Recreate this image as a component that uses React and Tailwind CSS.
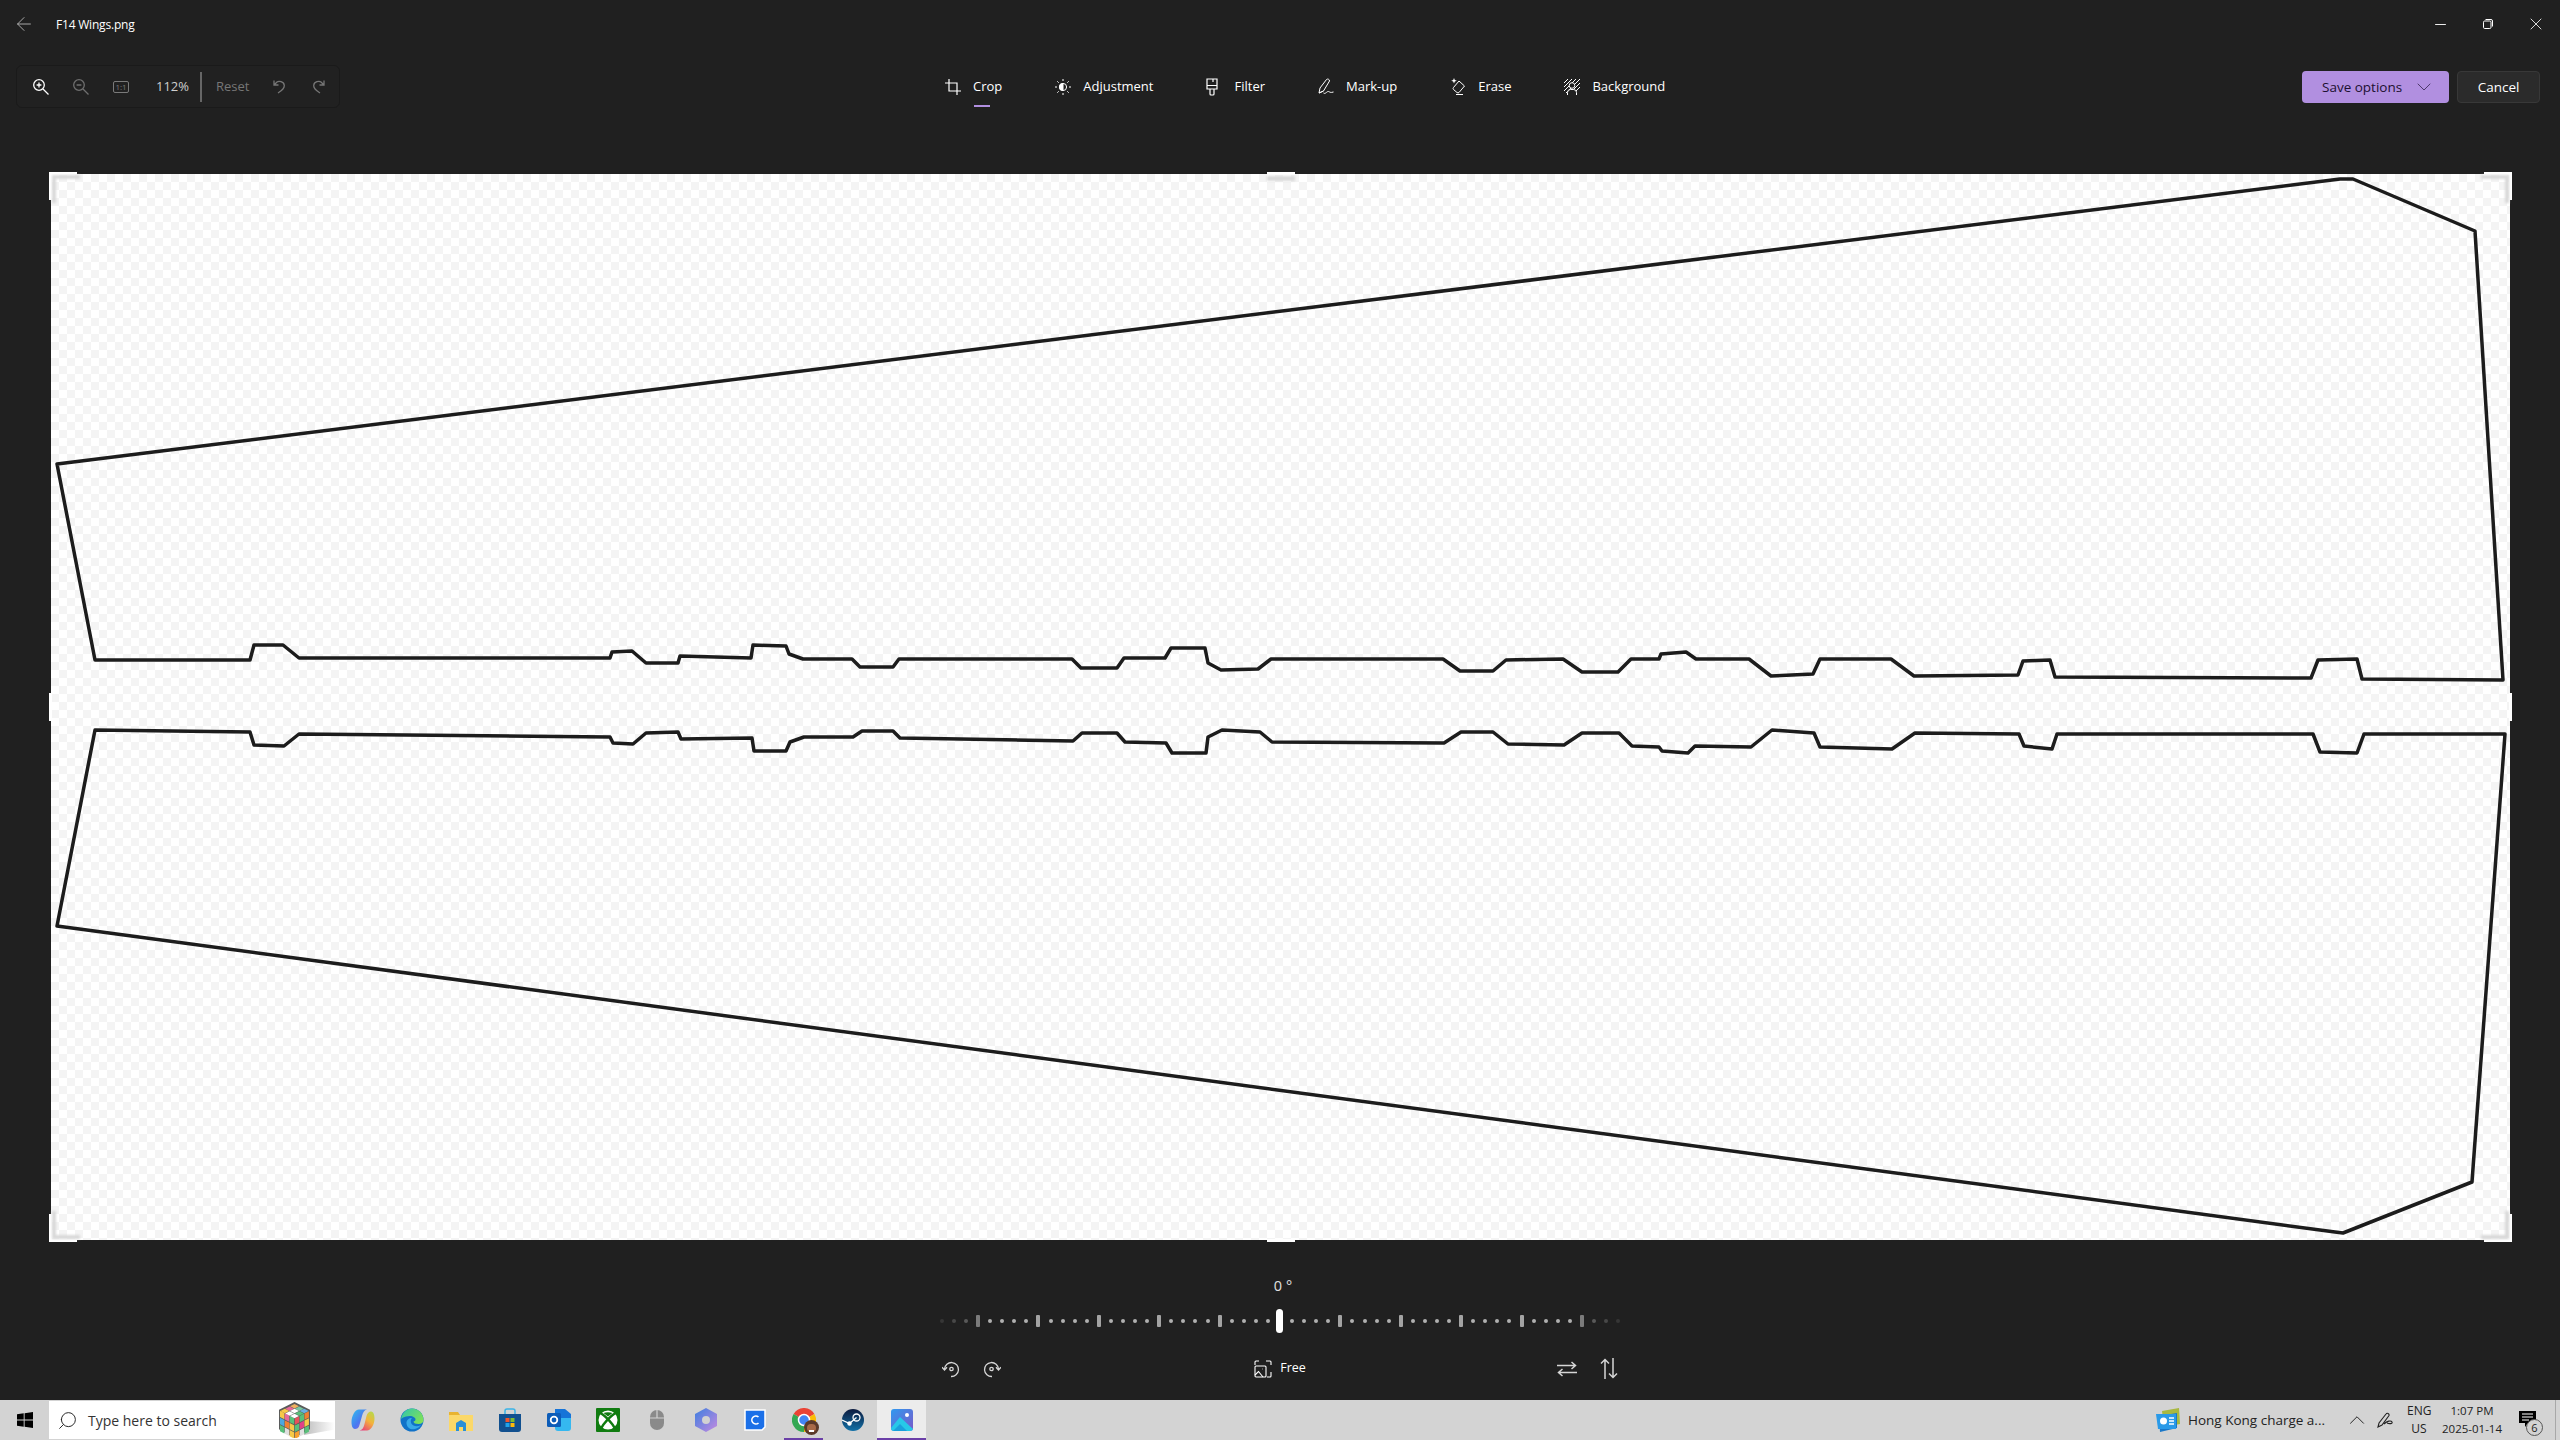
import React from "react";
import { ArrowLeft, ChevronDown, ChevronUp, Minus, X, Search } from "lucide-react";

// wing outlines, in page pixels (the svg viewBox starts at the image corner)
const upperWing = "57,464 2340,179 2353,179 2475,231 2503,680 2362,679 2357,659 2318,660 2311,678 2055,677 2050,660 2023,661 2018,675 1914,676 1891,659 1820,659 1813,674 1771,676 1749,659 1696,659 1686,652 1661,654 1659,659 1631,659 1618,672 1582,672 1563,659 1506,660 1493,671 1460,671 1443,659 1271,659 1258,669 1221,670 1208,663 1205,648 1171,648 1165,658 1124,658 1117,668 1081,668 1072,659 899,659 893,667 860,667 852,659 803,659 789,654 786,646 753,645 751,658 680,656 678,663 646,663 632,651 612,652 610,658 299,658 283,645 254,645 250,660 95,660";
const lowerWing = "57,926 2335,1232 2343,1233 2472,1182 2505,734 2364,734 2357,753 2320,752 2313,734 2057,734 2052,749 2024,746 2019,734 1915,733 1892,749 1820,747 1814,733 1772,730 1751,747 1695,746 1688,753 1662,751 1659,747 1632,746 1619,733 1582,733 1564,745 1508,744 1493,732 1461,732 1444,743 1272,742 1260,732 1222,730 1208,737 1206,753 1172,753 1166,743 1125,742 1117,733 1082,733 1073,741 900,738 893,731 862,731 853,737 804,737 790,742 786,751 754,751 752,738 681,739 678,732 646,733 633,744 613,743 610,737 299,734 284,746 254,745 250,732 95,730";

const tabs = [
  { label: "Crop", icon: CropIcon, active: true },
  { label: "Adjustment", icon: AdjustIcon },
  { label: "Filter", icon: BrushIcon },
  { label: "Mark-up", icon: MarkupIcon },
  { label: "Erase", icon: EraseIcon },
  { label: "Background", icon: BackgroundIcon },
];

function CropIcon() {
  return (
    <svg width="16" height="16" viewBox="0 0 16 16" fill="none" stroke="currentColor" strokeWidth="1.2">
      <path d="M4 0v12h12M0 4h12v12" />
    </svg>
  );
}

function AdjustIcon() {
  return (
    <svg width="16" height="16" viewBox="0 0 16 16" fill="none" stroke="currentColor" strokeWidth="1">
      <circle cx="8" cy="8" r="3.6" />
      <path d="M8 4.4a3.6 3.6 0 0 0 0 7.2z" fill="currentColor" />
      <path d="M8 0v2M8 14v2M0 8h2M14 8h2M2.3 2.3l1.4 1.4M12.3 12.3l1.4 1.4M2.3 13.7l1.4-1.4M12.3 3.7l1.4-1.4" />
    </svg>
  );
}

function BrushIcon() {
  return (
    <svg width="16" height="18" viewBox="0 0 16 18" fill="none" stroke="currentColor" strokeWidth="1.2">
      <path d="M1 1h10v10H1zM1 7.500h10M4 11v5a1 1 0 0 0 1 1h2a1 1 0 0 0 1-1v-5M7 1v3" />
    </svg>
  );
}

function MarkupIcon() {
  return (
    <svg width="16" height="17" viewBox="0 0 16 17" fill="none" stroke="currentColor" strokeWidth="1">
      <path d="M1 15l1-5 6.500-8.500c1-1 3.200-.2 3 1.500L5.500 13z" />
      <path d="M1 15l4.500-2M5.500 15c2 1.500 3.500-2 5-1.500s1.500 1.500 5 .5" />
    </svg>
  );
}

function EraseIcon() {
  return (
    <svg width="16" height="17" viewBox="0 0 16 17" fill="none" stroke="currentColor" strokeWidth="1">
      <path d="M9 3l5.500 5-5.500 6.500a1.500 1.500 0 0 1-2 0L3.500 11.500a1.500 1.500 0 0 1 0-2z" />
      <path d="M4 0l.8 2 2 .8-2 .8-.8 2-.8-2-2-.8 2-.8z" fill="currentColor" stroke="none" />
      <path d="M6 16.500h7" />
    </svg>
  );
}

function BackgroundIcon() {
  return (
    <svg width="16" height="16" viewBox="0 0 16 16" fill="none" stroke="currentColor" strokeWidth="1">
      <path d="M0 4l4-4M0 8l8-8M0 12L12 0M2 14L16 0M6 14l10-10M10 14l6-6" />
      <circle cx="8" cy="6.500" r="2.800" fill="#202020" />
      <path d="M3.500 16v-2.500a3 3 0 0 1 3-3h3a3 3 0 0 1 3 3V16" fill="#202020" />
    </svg>
  );
}

function ZoomIcon({ plus, className }) {
  return (
    <svg className={className} width="16" height="16" viewBox="0 0 16 16" fill="none" stroke="currentColor" strokeWidth="1.300">
      <circle cx="6" cy="6" r="5.300" />
      <path d="M10 10l5.500 5.500M3.600 6h4.800" />
      {plus && <path d="M6 3.600v4.800" />}
    </svg>
  );
}

function UndoIcon({ flip }) {
  return (
    <svg className={flip ? "-scale-x-100" : ""} width="13" height="15" viewBox="0 0 13 15" fill="none" stroke="currentColor" strokeWidth="1.300">
      <path d="M1 1.500v4.500h4.500M1 6l3-3c1.500-1.200 7-.8 7.300 3.500.2 3-2.300 5-6.300 7.500" />
    </svg>
  );
}

function RotateIcon({ flip }) {
  return (
    <svg className={flip ? "-scale-x-100" : ""} width="18" height="18" viewBox="0 0 18 18" fill="none" stroke="currentColor" strokeWidth="1.300">
      <path d="M2.500 9A7 7 0 1 1 9 16.500" />
      <path d="M0 7.200L2.500 10 5 7.200" />
      <circle cx="9.500" cy="9" r="1.700" />
    </svg>
  );
}

function FreeIcon() {
  return (
    <svg width="18" height="18" viewBox="0 0 18 18" fill="none" stroke="currentColor" strokeWidth="1.100">
      <path d="M1 5V2a1 1 0 0 1 1-1h3M12 1h4a1 1 0 0 1 1 1v3M17 12v4a1 1 0 0 1-1 1h-3" />
      <rect x="1" y="6" width="11" height="11" rx="1" />
      <path d="M1 15l3.500-3.500L9 17M8.500 9h.5" />
    </svg>
  );
}

function SwapIcon() {
  return (
    <svg width="20" height="16" viewBox="0 0 20 16" fill="none" stroke="currentColor" strokeWidth="1.500">
      <path d="M0 4.500h18M14.500 1L18.500 4.500 14.500 8M20 11.500H2M5.500 8L1.500 11.500 5.500 15" />
    </svg>
  );
}

function FlipIcon() {
  return (
    <svg width="18" height="21" viewBox="0 0 18 21" fill="none" stroke="currentColor" strokeWidth="1.500">
      <path d="M5 21V1.500M1 5.500L5 1.500 9 5.500M13 0v19.500M9 15.500l4 4 4-4" />
    </svg>
  );
}

// corner bracket of the crop box, white edge with a soft grey inner shade
function Corner({ className, shade }) {
  return (
    <div className={`absolute w-[28px] h-[28px] border-white ${className}`}>
      <div className={`absolute w-[28px] h-[28px] border-[#d9d9d9] blur-[1px] ${shade}`} />
    </div>
  );
}

function RotationScale() {
  const marks = [];
  for (let i = -28; i <= 28; i++) {
    const far = Math.abs(i);
    const fade = far > 25 ? 0.4 - (far - 26) * 0.12 : far === 25 ? 0.7 : 1;
    let mark;
    if (i === 0) mark = <div className="w-[7px] h-[24px] rounded-full bg-white" />;
    else if (i % 5 === 0) mark = <div className="w-[4px] h-[12px] rounded-[1px] bg-[#a3a3a3]" style={{ opacity: fade }} />;
    else mark = <div className="w-[4px] h-[4px] rounded-full bg-[#b0b0b0]" style={{ opacity: fade }} />;
    marks.push(
      <div key={i} className="w-[12.08px] flex justify-center items-center">
        {mark}
      </div>
    );
  }
  return <div className="flex items-center justify-center h-[24px]">{marks}</div>;
}

// taskbar logos
function Copilot() {
  return (
    <svg width="24" height="24" viewBox="0 0 24 24">
      <defs>
        <linearGradient id="cpA" x1="0" y1="0" x2="1" y2="1">
          <stop offset="0" stopColor="#2fc0ee" />
          <stop offset="0.55" stopColor="#4a78f0" />
          <stop offset="1" stopColor="#b85ad8" />
        </linearGradient>
        <linearGradient id="cpB" x1="0.800" y1="0" x2="0.200" y2="1">
          <stop offset="0" stopColor="#b8d84a" />
          <stop offset="0.45" stopColor="#f4b23c" />
          <stop offset="1" stopColor="#e8407a" />
        </linearGradient>
      </defs>
      <path d="M8 1.500h8c-3 .5-4 3-5 6.500l-2.500 9c-.8 3-2.500 4-4.500 4-2.800 0-3.500-4-3.500-7C.5 8 4 1.500 8 1.500z" fill="url(#cpA)" />
      <path d="M16 22.500H8.500c3-.5 4-3 5-6.500l2-8c.8-3 2.500-4.500 4.500-4.500 2.800 0 3.500 4 3.500 7 0 6-3.500 12-7.500 12z" fill="url(#cpB)" />
    </svg>
  );
}

function Edge() {
  return (
    <svg width="24" height="24" viewBox="0 0 24 24">
      <defs>
        <linearGradient id="edA" x1="0" y1="0" x2="1" y2="0.600">
          <stop offset="0" stopColor="#2fc5b0" />
          <stop offset="1" stopColor="#7ce05a" />
        </linearGradient>
      </defs>
      <circle cx="12" cy="12" r="11.500" fill="#1172c8" />
      <path d="M1 11C2 5 6.500.500 12 .500 18.500.500 23.500 5.500 23.500 12c0 2.500-2 4-5 4-3 0-5-.8-5-2.500 2-.5 2.500-2 1.500-3.500C13 7.500 9 7.500 6 8.500 4 9 2 10 1 11z" fill="url(#edA)" />
      <path d="M15 21c-4 1-8-1-8.500-5.500C6.200 12 9 10 12 10c-2 2-1.500 6 1.500 7.500 2 1 5 1 7.500-.5-1.200 2-3.500 3.300-6 4z" fill="#38a9e8" />
    </svg>
  );
}

function Explorer() {
  return (
    <svg width="24" height="22" viewBox="0 0 24 22">
      <path d="M0 3h9l2 3h13v16H0z" fill="#e8b330" />
      <rect x="0" y="6" width="24" height="16" fill="#fbd869" />
      <path d="M7 14l5-3 5 3v8h-3v-4h-4v4H7z" fill="#2a8fd8" />
    </svg>
  );
}

function Store() {
  return (
    <svg width="24" height="24" viewBox="0 0 24 24">
      <path d="M7 6V3a2 2 0 0 1 2-2h6a2 2 0 0 1 2 2v3" fill="none" stroke="#3ab4e8" strokeWidth="1.500" />
      <path d="M1 6h22v15a3 3 0 0 1-3 3H4a3 3 0 0 1-3-3z" fill="#11508f" />
      <rect x="7.500" y="10" width="4" height="4" fill="#f0542c" />
      <rect x="12.500" y="10" width="4" height="4" fill="#7cbb30" />
      <rect x="7.500" y="15" width="4" height="4" fill="#1fa3ea" />
      <rect x="12.500" y="15" width="4" height="4" fill="#fdb90a" />
    </svg>
  );
}

function Outlook() {
  return (
    <svg width="24" height="24" viewBox="0 0 24 24">
      <path d="M8 1h10l6 5v11a3 3 0 0 1-3 3H8z" fill="#1674d8" />
      <path d="M8 10h16v10a3 3 0 0 1-3 3H11a3 3 0 0 1-3-3z" fill="#35b8f0" />
      <rect x="0" y="5" width="14" height="14" rx="1.500" fill="#0c5cb8" />
      <circle cx="7" cy="12" r="3.300" fill="none" stroke="#ffffff" strokeWidth="1.800" />
    </svg>
  );
}

function Xbox() {
  return (
    <svg width="24" height="24" viewBox="0 0 24 24">
      <rect width="24" height="24" rx="1" fill="#107c10" />
      <circle cx="12" cy="12" r="9.500" fill="#ffffff" />
      <path d="M3 4C8 7 15 13 20 22M21 4C16 7 9 13 4 22" fill="none" stroke="#107c10" strokeWidth="2.500" />
      <path d="M7.500 5C10 4 14 4 16.500 5L12 8.500z" fill="#107c10" />
    </svg>
  );
}

function MouseApp() {
  return (
    <svg width="14" height="20" viewBox="0 0 14 20">
      <rect width="14" height="20" rx="7" fill="#8a8a8a" />
      <path d="M0 8h14M7 0v8" stroke="#d2d2d2" strokeWidth="1.200" />
    </svg>
  );
}

function M365() {
  return (
    <svg width="22" height="24" viewBox="0 0 22 24">
      <defs>
        <linearGradient id="msA" x1="0" y1="0" x2="1" y2="1">
          <stop offset="0" stopColor="#3d7ee0" />
          <stop offset="1" stopColor="#c48ae0" />
        </linearGradient>
      </defs>
      <path d="M11 0l11 6v12l-11 6-11-6V6z" fill="url(#msA)" />
      <circle cx="11" cy="12" r="4" fill="#d2d2d2" />
    </svg>
  );
}

function CApp() {
  return (
    <svg width="22" height="22" viewBox="0 0 22 22">
      <path d="M1 1h20v17l-3 3H1z" fill="#1a6fe8" stroke="#ffffff" strokeWidth="1.500" />
      <path d="M14.500 8a4 4 0 1 0 0 6" fill="none" stroke="#ffffff" strokeWidth="1.600" />
    </svg>
  );
}

function ChromeAvatar() {
  return (
    <div className="relative w-[24px] h-[24px]">
      <svg width="24" height="24" viewBox="0 0 24 24">
        <path d="M12 12L1.600 6A12 12 0 0 1 22.400 6z" fill="#ea4335" />
        <path d="M12 12l10.400-6A12 12 0 0 1 12 24z" fill="#fbbc05" />
        <path d="M12 12L12 24A12 12 0 0 1 1.600 6z" fill="#34a853" />
        <circle cx="12" cy="12" r="5.500" fill="#4285f4" stroke="#ffffff" strokeWidth="1.500" />
      </svg>
      <div className="absolute -right-[3px] -bottom-[3px] w-[15px] h-[15px] rounded-full bg-[#5a3a2a]">
        <div className="absolute left-[3px] top-[4px] w-[9px] h-[8px] rounded-full bg-[#a86a48]" />
        <div className="absolute left-[5px] top-[10px] w-[5px] h-[2px] bg-white" />
      </div>
    </div>
  );
}

function Steam() {
  return (
    <svg width="22" height="22" viewBox="0 0 22 22">
      <defs>
        <linearGradient id="stA" x1="0" y1="0" x2="0" y2="1">
          <stop offset="0" stopColor="#0c1a3e" />
          <stop offset="1" stopColor="#1372a8" />
        </linearGradient>
      </defs>
      <circle cx="11" cy="11" r="11" fill="url(#stA)" />
      <circle cx="14.500" cy="8.500" r="3.500" fill="none" stroke="#ffffff" strokeWidth="1.300" />
      <circle cx="7.500" cy="14.500" r="2.200" fill="#ffffff" />
      <path d="M0 11l7.500 3.500 7-6" stroke="#ffffff" strokeWidth="1.300" fill="none" />
    </svg>
  );
}

function Photos() {
  return (
    <svg width="22" height="22" viewBox="0 0 22 22">
      <defs>
        <linearGradient id="phA" x1="0" y1="0" x2="1" y2="1">
          <stop offset="0" stopColor="#2f9af0" />
          <stop offset="1" stopColor="#7a58c8" />
        </linearGradient>
      </defs>
      <rect width="22" height="22" rx="3" fill="url(#phA)" />
      <path d="M0 19l9-11 13 12v-1a3 3 0 0 1-3 3H3a3 3 0 0 1-3-3z" fill="#27c8e8" />
      <path d="M2 22l7-7 7 7z" fill="#1aa0dc" />
      <circle cx="16" cy="6" r="2" fill="#ffffff" />
    </svg>
  );
}

// little cube that sits in the search box
function Cube() {
  const left = ["#f7c948", "#e86a9a", "#58c07a", "#4aa8e0", "#f08030", "#f7c948", "#58c07a", "#e0e0e0", "#f7c948"];
  const right = ["#e8505a", "#58c07a", "#f08030", "#58c07a", "#e0408a", "#f7c948", "#f7a030", "#e0e0e0", "#58c07a"];
  const top = ["#f0b060", "#7ac8a0", "#6ab0e0", "#e86a9a", "#ffffff", "#58c07a", "#f7c948", "#ffffff", "#ffffff"];
  const cells = [];
  for (let r = 0; r < 3; r++) {
    for (let c = 0; c < 3; c++) {
      const k = r * 3 + c;
      const lx = 1 + c * 5;
      const ly = 9 + r * 7.300 + c * 2.600;
      cells.push(<path key={`l${k}`} d={`M${lx} ${ly}l4.600 2.300v6.500l-4.600-2.300z`} fill={left[k]} />);
      const rx = 16.300 + c * 5;
      const ry = 17 + r * 7.300 - c * 2.600;
      cells.push(<path key={`r${k}`} d={`M${rx} ${ry}l4.600-2.300v6.500l-4.600 2.300z`} fill={right[k]} />);
      const tx = 16 + (c - r) * 5;
      const ty = 2 + (c + r) * 2.500;
      cells.push(<path key={`t${k}`} d={`M${tx} ${ty}l4.600 2.300-4.600 2.300-4.600-2.300z`} fill={top[k]} />);
    }
  }
  return (
    <svg width="31" height="36" viewBox="0 0 32 37">
      <path d="M16 0l16 8v20l-16 9-16-9V8z" fill="#5a5a5a" />
      {cells}
    </svg>
  );
}

const taskbarApps = [
  { id: "copilot", el: <Copilot /> },
  { id: "edge", el: <Edge /> },
  { id: "explorer", el: <Explorer /> },
  { id: "store", el: <Store /> },
  { id: "outlook", el: <Outlook /> },
  { id: "xbox", el: <Xbox /> },
  { id: "mouse", el: <MouseApp /> },
  { id: "m365", el: <M365 /> },
  { id: "capp", el: <CApp /> },
  { id: "chrome", el: <ChromeAvatar />, running: true },
  { id: "steam", el: <Steam /> },
  { id: "photos", el: <Photos />, active: true },
];

function Taskbar() {
  return (
    <div className="h-[40px] shrink-0 bg-[#d3d3d3] flex items-center text-[#222222] font-['Open_Sans',sans-serif]">
      <div className="w-[49px] h-full flex items-center justify-center">
        <svg width="16" height="16" viewBox="0 0 16 16" fill="#000000">
          <path d="M0 2.300l6.700-1v6.300H0zM7.600 1.200L16 0v7.600H7.600zM0 8.400h6.700v6.300L0 13.700zM7.600 8.400H16V16l-8.400-1.200z" />
        </svg>
      </div>
      <div className="relative w-[286px] h-[38px] bg-white flex items-center pl-[8px] overflow-hidden">
        <Search size={21} strokeWidth={1.100} className="-scale-x-100 text-[#222222]" />
        <span className="ml-[10px] text-[14px] text-[#333333] whitespace-nowrap">Type here to search</span>
        <div className="absolute left-[255px] top-[20px] w-[31px] h-[14px] bg-gradient-to-r from-[#bdbdbd] to-white [clip-path:polygon(0_0,100%_10%,100%_60%,0_100%)]" />
        <div className="absolute left-[230px] top-[1px]">
          <Cube />
        </div>
      </div>
      <div className="flex h-full ml-[3px]">
        {taskbarApps.map((app) => (
          <div key={app.id} className={`relative w-[49px] h-full flex items-center justify-center ${app.active ? "bg-[#ececec]" : ""}`}>
            {app.el}
            {app.running && <div className="absolute bottom-0 left-[5px] right-[5px] h-[2px] bg-[#6b3fa8]" />}
            {app.active && <div className="absolute bottom-0 left-0 right-0 h-[2px] bg-[#6b3fa8]" />}
          </div>
        ))}
      </div>
      <div className="ml-auto flex items-center h-full">
        <svg width="24" height="24" viewBox="0 0 24 24">
          <path d="M6 3l17-3 1 16-16 3z" fill="#a8b840" />
          <path d="M3 8l18-3v15L4 24z" fill="#1a78c8" />
          <path d="M0 6h20v15H2z" fill="#2a9ae8" />
          <circle cx="7.500" cy="13" r="3.500" fill="#ffffff" />
          <path d="M13 10h5M13 13h5M13 16h5" stroke="#ffffff" strokeWidth="1.300" />
        </svg>
        <span className="ml-[8px] text-[13.500px] whitespace-nowrap">Hong Kong charge a...</span>
        <ChevronUp size={26} strokeWidth={0.900} className="ml-[19px]" />
        <svg className="ml-[7px]" width="16" height="16" viewBox="0 0 16 16" fill="none" stroke="#222222" strokeWidth="1.100">
          <path d="M1 15l1-4 7-9c1-1.500 3.500-.5 3 1.500L5 13zM7 12c3-3 7-4 8-2s-3 2-5 1" />
        </svg>
        <div className="ml-[14px] w-[24px] text-center text-[12px] leading-[18px]">
          ENG
          <br />
          US
        </div>
        <div className="ml-[11px] w-[60px] text-center text-[11.500px] leading-[18px] whitespace-nowrap">
          1:07 PM
          <br />
          2025-01-14
        </div>
        <div className="relative ml-[17px] w-[34px] h-full">
          <svg className="absolute left-0 top-[11px]" width="17" height="16" viewBox="0 0 17 16">
            <path d="M0 0h17v12H9l-3 4v-4H0z" fill="#000000" />
            <path d="M3 3h11M3 6h11M3 9h7" stroke="#ffffff" strokeWidth="1" />
          </svg>
          <div className="absolute left-[7px] top-[19px] w-[17px] h-[17px] rounded-full border border-[#555555] bg-[#d3d3d3] flex items-center justify-center text-[11px] leading-none">
            6
          </div>
        </div>
        <div className="ml-[2px] w-px h-full bg-[#a8a8a8] mr-[4px]" />
      </div>
    </div>
  );
}

export default function App() {
  return (
    <div className="w-screen h-screen flex flex-col overflow-hidden bg-[#202020] text-white font-['Open_Sans',sans-serif]">
      {/* title bar */}
      <div className="h-[48px] shrink-0 flex items-center pl-[13px]">
        <ArrowLeft size={22} strokeWidth={1} className="text-[#b5b5b5]" />
        <span className="ml-[21px] mt-[1px] text-[12px] tracking-[-0.2px]">F14 Wings.png</span>
        <div className="ml-auto flex items-center text-white">
          <div className="w-[48px] flex justify-center">
            <Minus size={17} strokeWidth={1.300} />
          </div>
          <div className="w-[48px] flex justify-center">
            <svg width="10" height="10" viewBox="0 0 10 10" fill="none" stroke="currentColor" strokeWidth="1">
              <rect x="0.500" y="2" width="7.500" height="7.500" rx="1.200" />
              <path d="M2.500 .5H8A1.500 1.500 0 0 1 9.500 2v5.500" />
            </svg>
          </div>
          <div className="w-[48px] flex justify-center">
            <X size={20} strokeWidth={1} />
          </div>
        </div>
      </div>

      {/* tool row */}
      <div className="h-[43px] mt-[17px] shrink-0 flex pl-[16px] pr-[20px]">
        <div className="w-[324px] h-full rounded-[6px] border border-[#1a1a1a] bg-[#212121] flex items-center relative">
          <ZoomIcon plus className="ml-[16px] text-white" />
          <ZoomIcon className="ml-[24px] text-[#6f6f6f]" />
          <div className="ml-[24px] w-[16px] h-[12px] rounded-[2px] border border-[#7a7a7a] text-[#7a7a7a] text-[8px] leading-[10px] text-center">
            1:1
          </div>
          <span className="ml-[27px] text-[13px] text-[#cfcfcf]">112%</span>
          <div className="ml-[11px] w-[2px] h-[30px] bg-[#666666]" />
          <span className="ml-[14px] text-[13px] text-[#767676]">Reset</span>
          <div className="ml-[23px] text-[#767676]">
            <UndoIcon />
          </div>
          <div className="ml-[26px] text-[#767676]">
            <UndoIcon flip />
          </div>
        </div>

        <div className="ml-[605px] flex items-center gap-[53px] h-full">
          {tabs.map((t) => {
            const Icon = t.icon;
            return (
              <div key={t.label} className="relative flex items-center gap-[12px] text-[13px] text-white">
                <Icon />
                <span className="relative">
                  {t.label}
                  {t.active && <span className="absolute left-px top-[28px] w-[16px] h-[2px] bg-[#b18fe0]" />}
                </span>
              </div>
            );
          })}
        </div>

        <div className="ml-auto flex items-start gap-[8px] pt-[6px]">
          <div className="w-[147px] h-[32px] rounded-[4px] bg-[#b18fe0] text-[#1c1030] flex items-center pl-[20px] text-[13.500px]">
            Save options
            <ChevronDown size={24} strokeWidth={0.800} className="ml-[10px] text-[#33254d]" />
          </div>
          <div className="w-[83px] h-[32px] rounded-[4px] bg-[#2b2b2b] border border-[#383838] flex items-center justify-center text-[13.500px]">
            Cancel
          </div>
        </div>
      </div>

      {/* image with crop box */}
      <div className="relative mt-[66px] ml-[51px] w-[2459px] h-[1066px] shrink-0 bg-[repeating-conic-gradient(#f4f4f4_0%_25%,#ffffff_0%_50%)] bg-[length:16px_16px]">
        <svg className="absolute inset-0 blur-[0.6px]" width="2459" height="1066" viewBox="51 174 2459 1066" fill="none" stroke="#1c1c1c" strokeWidth="3.500" strokeLinejoin="round">
          <polygon points={upperWing} />
          <polygon points={lowerWing} />
        </svg>

        <Corner className="-left-[2px] -top-[2px] border-l-[3px] border-t-[3px]" shade="left-0 top-0 border-l-[4px] border-t-[4px]" />
        <Corner className="-right-[2px] -top-[2px] border-r-[3px] border-t-[3px]" shade="right-0 top-0 border-r-[4px] border-t-[4px]" />
        <Corner className="-left-[2px] -bottom-[2px] border-l-[3px] border-b-[3px]" shade="left-0 bottom-0 border-l-[4px] border-b-[4px]" />
        <Corner className="-right-[2px] -bottom-[2px] border-r-[3px] border-b-[3px]" shade="right-0 bottom-0 border-r-[4px] border-b-[4px]" />

        {/* edge handles */}
        <div className="absolute left-1/2 -top-[2px] -ml-[14px] w-[28px] h-[3px] bg-white" />
        <div className="absolute left-1/2 top-[2px] -ml-[14px] w-[28px] h-[5px] bg-[#d9d9d9] blur-[1px]" />
        <div className="absolute left-1/2 -bottom-[2px] -ml-[14px] w-[28px] h-[3px] bg-white" />
        <div className="absolute top-1/2 -left-[2px] -mt-[14px] w-[3px] h-[28px] bg-white" />
        <div className="absolute top-1/2 -right-[2px] -mt-[14px] w-[3px] h-[28px] bg-white" />
      </div>

      {/* rotation controls */}
      <div className="flex-1 flex flex-col items-center">
        <div className="mt-[36px] h-[20px] text-[14.500px] leading-[20px] text-[#e0e0e0] pl-[6px]">0 °</div>
        <div className="mt-[13px]">
          <RotationScale />
        </div>
        <div className="mt-[25px] w-[680px] flex items-center justify-between text-[#d6d6d6]">
          <div className="flex items-center gap-[23px] pl-[2px] w-[63px]">
            <RotateIcon />
            <RotateIcon flip />
          </div>
          <div className="flex items-center gap-[8px] text-[12.500px] text-white">
            <FreeIcon />
            Free
          </div>
          <div className="flex items-center gap-[23px] pr-[2px] w-[63px]">
            <SwapIcon />
            <FlipIcon />
          </div>
        </div>
      </div>

      <Taskbar />
    </div>
  );
}
